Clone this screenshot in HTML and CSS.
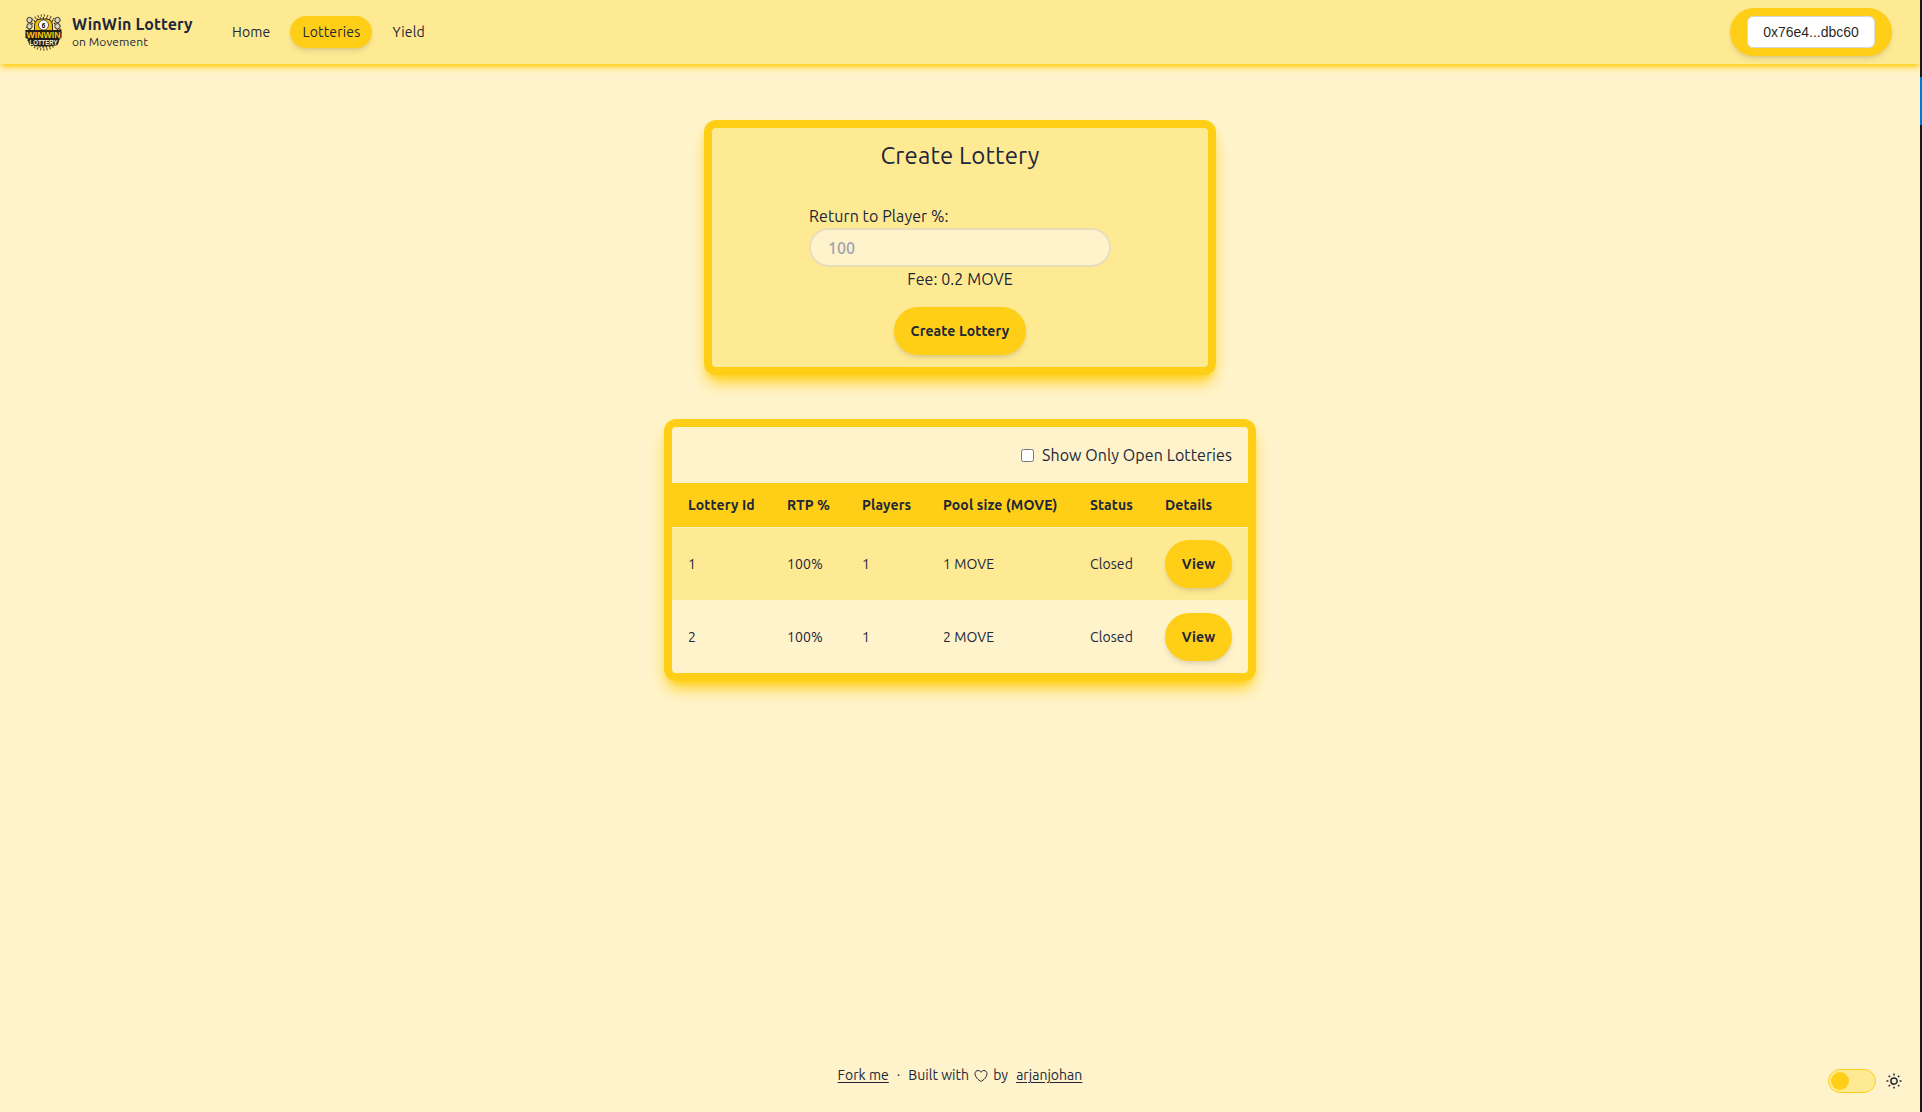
FILE: index.html
```html
<!DOCTYPE html>
<html lang="en">
<head>
<meta charset="utf-8">
<title>WinWin Lottery</title>
<link rel="stylesheet" href="styles.css">
</head>
<body>
<div class="page">
  <header class="navbar">
    <a class="brand">
      <svg class="logo" viewBox="0 0 37 37">
        <circle class="rays" cx="18.5" cy="18.5" r="17"/>
        <circle class="rays rays-inner" cx="18.5" cy="18.5" r="14.500"/>
        <path class="gold" d="M9.500 17v-5q0-6.500 6-7h6q6 .5 6 7v5z"/>
        <circle class="dot" cx="4.500" cy="6" r="2.700"/>
        <circle class="dot" cx="4.500" cy="12.300" r="2.700"/>
        <circle class="dot" cx="32.500" cy="6" r="2.700"/>
        <circle class="dot" cx="32.500" cy="12.300" r="2.700"/>
        <circle class="ball" cx="18.500" cy="11" r="5"/>
        <text class="ball-text" x="18.500" y="13.500" text-anchor="middle">6</text>
        <path class="plate" d="M.5 16h36v8l-2.500 1v2l-1.500 4q-14 3-28 0L3 27v-2L.5 24z"/>
        <text class="logo-win" x="18.500" y="24" text-anchor="middle" textLength="34" lengthAdjust="spacingAndGlyphs">WINWIN</text>
        <text class="logo-lot" x="18.500" y="31" text-anchor="middle" textLength="28" lengthAdjust="spacingAndGlyphs">LOTTERY</text>
      </svg>
      <span class="brand-text">
        <span class="brand-name">WinWin Lottery</span>
        <span class="brand-sub">on Movement</span>
      </span>
    </a>
    <nav class="menu">
      <a class="item">Home</a>
      <a class="item active">Lotteries</a>
      <a class="item">Yield</a>
    </nav>
    <div class="wallet"><button class="address">0x76e4...dbc60</button></div>
  </header>

  <main>
    <section class="card create">
      <h2>Create Lottery</h2>
      <div class="field">
        <label for="rtp">Return to Player %:</label>
        <input id="rtp" class="input" type="text" placeholder="100">
      </div>
      <p class="fee">Fee: 0.2 MOVE</p>
      <button class="btn">Create Lottery</button>
    </section>

    <section class="card list">
      <label class="filter"><input type="checkbox"><span>Show Only Open Lotteries</span></label>
      <table>
        <colgroup><col class="col-id"><col class="col-rtp"><col class="col-players"><col class="col-pool"><col class="col-status"><col class="col-details"></colgroup>
        <thead>
          <tr><th>Lottery Id</th><th>RTP %</th><th>Players</th><th>Pool size (MOVE)</th><th>Status</th><th>Details</th></tr>
        </thead>
        <tbody>
          <tr><td>1</td><td>100%</td><td>1</td><td>1 MOVE</td><td>Closed</td><td><button class="btn view">View</button></td></tr>
          <tr><td>2</td><td>100%</td><td>1</td><td>2 MOVE</td><td>Closed</td><td><button class="btn view">View</button></td></tr>
        </tbody>
      </table>
    </section>
  </main>

  <footer class="footer">
    <div class="credits">
      <a class="link">Fork me</a>
      <span>·</span>
      <div class="built">
        <span>Built with</span>
        <svg class="heart" viewBox="0 0 24 24"><path d="M21 8.250c0-2.485-2.099-4.500-4.688-4.500-1.935 0-3.597 1.126-4.312 2.733-.715-1.607-2.377-2.733-4.313-2.733C5.100 3.750 3 5.765 3 8.250c0 7.220 9 12 9 12s9-4.780 9-12z"/></svg>
        <span>by</span>
      </div>
      <a class="link">arjanjohan</a>
    </div>
    <div class="theme">
      <span class="toggle"><span class="knob"></span></span>
      <svg class="sun" viewBox="0 0 24 24"><path d="M12 3v2.250m6.364.386-1.591 1.591M21 12h-2.250m-.386 6.364-1.591-1.591M12 18.750V21m-4.773-4.227-1.591 1.591M5.250 12H3m4.227-4.773L5.636 5.636M15.750 12a3.750 3.750 0 1 1-7.500 0 3.750 3.750 0 0 1 7.500 0z"/></svg>
    </div>
  </footer>
</div>
<div class="edge"><div class="edge-mark"></div></div>
</body>
</html>
```
FILE: styles.css
```css
* { box-sizing: border-box; }

body {
  margin: 0;
  display: flex;
  height: 1112px;
  background: #fff3cb;
  color: #212638;
  font: 16px/24px Ubuntu, "Noto Sans", sans-serif;
  letter-spacing: .08px;
}

.page {
  width: 1920px;
  display: flex;
  flex-direction: column;
}

.edge { width: 2px; background: #1a1a1a; padding-top: 77px; }
.edge-mark { height: 48px; background: #0078d7; }

/* Header */
.navbar {
  height: 64px;
  display: flex;
  align-items: center;
  padding: 0 28px 0 25px;
  background: #ffea94;
  box-shadow: 0 4px 6px -1px #ffcf17, 0 2px 4px -2px #ffcf17;
}
.brand { display: flex; align-items: center; gap: 10px; width: 195px; }
.logo { width: 37px; height: 37px; flex: none; }
.brand-text { display: flex; flex-direction: column; white-space: nowrap; }
.brand-name { font-weight: 700; line-height: 20px; }
.brand-sub { font-size: 12px; line-height: 16px; }
.menu { display: flex; gap: 8px; }
.item {
  padding: 6px 12px;
  border-radius: 16px;
  font-size: 14px;
  line-height: 20px;
  letter-spacing: .16px;
}
.active { background: #ffcf17; box-shadow: 0 4px 6px -1px #0000001a, 0 2px 4px -2px #0000001a; }
.wallet {
  margin-left: auto;
  width: 162px;
  height: 48px;
  display: flex;
  align-items: center;
  justify-content: center;
  border-radius: 24px;
  background: #ffcf17;
  box-shadow: 0 4px 6px -1px #0000001a, 0 2px 4px -2px #0000001a;
}
.address {
  width: 128px;
  height: 32px;
  padding: 0;
  border: 1px solid #d9d9d9;
  border-radius: 6px;
  background: #fff;
  color: #000000e0;
  font: 14px "Liberation Sans", Arial, sans-serif;
}

/* Cards */
main { flex: 1; display: flex; flex-direction: column; align-items: center; padding-top: 56px; }
.card {
  border: 8px solid #ffcf17;
  border-radius: 12px;
  box-shadow: 0 10px 15px -3px #ffcf17, 0 4px 6px -4px #ffcf17;
}
.create {
  width: 512px;
  height: 255px;
  display: flex;
  flex-direction: column;
  align-items: center;
  background: #ffea94;
}
h2 { margin: 12px 0 0; font-size: 24px; line-height: 32px; font-weight: 400; letter-spacing: .15px; }
.field { width: 302px; margin-top: 32px; display: flex; flex-direction: column; }
.input {
  height: 39px;
  padding: 0 17px;
  border: 2px solid #e9debb;
  border-radius: 20px;
  background: #fff3cb;
  font: 500 16px Ubuntu, "Noto Sans", sans-serif;
}
.input::placeholder { color: #9ca3af; opacity: 1; }
.fee { margin: 0; }
.btn {
  width: 132px;
  height: 48px;
  margin-top: 16px;
  padding: 0;
  border: 0;
  border-radius: 24px;
  background: #ffcf17;
  color: #212638;
  font: 700 14px Ubuntu, "Noto Sans", sans-serif;
  letter-spacing: .12px;
  box-shadow: 0 4px 6px -1px #0000001a, 0 2px 4px -2px #0000001a;
}
.list { width: 592px; margin-top: 44px; }
.filter {
  height: 56px;
  padding-right: 16px;
  display: flex;
  align-items: center;
  justify-content: flex-end;
  gap: 8px;
}
.filter input { width: 13px; height: 13px; margin: 0; }

table { width: 576px; border-collapse: collapse; table-layout: fixed; font-size: 14px; line-height: 20px; }
.col-id { width: 99px; }
.col-rtp { width: 75px; }
.col-players { width: 81px; }
.col-pool { width: 147px; }
.col-status { width: 75px; }
.col-details { width: 99px; }
th, td { padding: 0 0 0 16px; text-align: left; white-space: nowrap; }
th { height: 44px; background: #ffcf17; font-weight: 700; letter-spacing: .12px; }
td { height: 73px; }
tbody tr:first-child { background: #ffea94; border-top: 1px solid #fff3cb; }
.view { display: block; width: 67px; margin: 0; }

/* Footer */
.footer {
  height: 74px;
  display: grid;
  grid-template-columns: 92px 1fr 92px;
  font-size: 14px;
  line-height: 20px;
  letter-spacing: .04px;
}
.credits {
  grid-column: 2;
  display: flex;
  align-items: center;
  justify-content: center;
  gap: 8px;
  height: 20px;
  margin-top: 27px;
  white-space: nowrap;
}
.link { text-decoration: underline; text-underline-offset: 2px; }
.built { display: flex; align-items: center; gap: 4px; }
.heart { width: 16px; height: 16px; margin: 2px 0 0; fill: none; stroke: #212638; stroke-width: 1.5; }
.theme { grid-column: 3; display: flex; align-items: center; gap: 8px; height: 24px; margin-top: 31px; }
.toggle { width: 48px; height: 24px; padding: 2px; border: 1px solid #ffcf17; border-radius: 12px; background: #ffea94; }
.knob { display: block; width: 18px; height: 18px; border-radius: 50%; background: #ffcf17; }
.sun { width: 20px; height: 20px; fill: none; stroke: #212638; stroke-width: 1.8; }

/* Logo artwork */
.logo { letter-spacing: 0; overflow: visible; }
.rays { fill: none; stroke: #6b5e35; stroke-width: 2.4; stroke-dasharray: 1.2 2; }
.rays-inner { stroke: #3b3525; stroke-width: 2; }
.gold { fill: #f4bd0c; stroke: #2a2618; stroke-width: 1; }
.dot { fill: #d8d4c0; stroke: #3a3728; stroke-width: 1; }
.ball { fill: #fff; stroke: #333; stroke-width: .8; }
.ball-text { font: 700 6.5px "Liberation Sans", sans-serif; }
.plate { fill: #211f18; }
.logo-win, .logo-lot { font: 700 9.5px "Liberation Sans", sans-serif; fill: #fbc90d; }
.logo-lot { font-size: 7px; fill: #f3efdd; }
```
